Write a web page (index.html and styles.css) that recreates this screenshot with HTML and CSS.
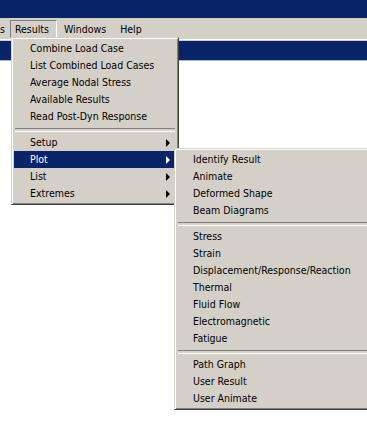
FILE: index.html
```html
<!DOCTYPE html>
<html lang="en">
<head>
  <meta charset="UTF-8">
  <title>Results menu</title>
  <link rel="stylesheet" href="styles.css">
</head>
<body>
  <div class="app">
    <div class="titlebar"></div>

    <div class="menubar">
      <span class="menubar-item clip">s</span>
      <span class="menubar-item open">Results</span>
      <span class="menubar-item">Windows</span>
      <span class="menubar-item">Help</span>
    </div>

    <div class="workspace">
      <div class="child-title"></div>
      <div class="child-body"></div>
    </div>

    <!-- Menu Results -->
    <div class="menu menu-results">
      <div class="item">Combine Load Case</div>
      <div class="item">List Combined Load Cases</div>
      <div class="item">Average Nodal Stress</div>
      <div class="item">Available Results</div>
      <div class="item">Read Post-Dyn Response</div>
      <div class="sep"></div>
      <div class="item sub">Setup</div>
      <div class="item sub active">Plot</div>
      <div class="item sub">List</div>
      <div class="item sub">Extremes</div>
    </div>

    <!-- Submenu Plot -->
    <div class="menu menu-plot">
      <div class="item">Identify Result</div>
      <div class="item">Animate</div>
      <div class="item">Deformed Shape</div>
      <div class="item">Beam Diagrams</div>
      <div class="sep"></div>
      <div class="item">Stress</div>
      <div class="item">Strain</div>
      <div class="item">Displacement/Response/Reaction</div>
      <div class="item">Thermal</div>
      <div class="item">Fluid Flow</div>
      <div class="item">Electromagnetic</div>
      <div class="item">Fatigue</div>
      <div class="sep"></div>
      <div class="item">Path Graph</div>
      <div class="item">User Result</div>
      <div class="item">User Animate</div>
    </div>
  </div>
</body>
</html>
```

FILE: styles.css
```css
/* Reset e tipografia */
* { box-sizing: border-box; margin: 0; padding: 0; }
body {
  font-family: "DejaVu Sans Condensed", "DejaVu Sans", sans-serif;
  font-size: 10.5px;
  color: #000;
  background: #fff;
  overflow: hidden;
}

.app {
  position: relative;
  width: 367px;
  height: 423px;
  display: flex;
  flex-direction: column;
}

/* Barra de título */
.titlebar {
  height: 18px;
  background: #0a246a;
}

/* Barra de menus */
.menubar {
  height: 21px;
  background: #d4d0c8;
  display: flex;
  align-items: center;
}
.menubar-item {
  height: 18px;
  line-height: 17px;
  padding: 0 6px;
  border: 1px solid transparent;
}
.menubar-item.clip {
  padding: 0 4px 0 0;
  margin-left: -1px;
}
.menubar-item.open {
  padding: 0 7px 0 4px;
  border-color: #808080 #fff #fff #808080;
}

/* Janela filha */
.workspace {
  flex: 1;
  display: flex;
  flex-direction: column;
  border-top: 1px solid #fff;
  padding-top: 1px;
  background: #d4d0c8;
}
.child-title {
  height: 20px;
  background: #0a246a;
  border-bottom: 1px solid #a6b6d8;
}
.child-body {
  flex: 1;
  background: #fff;
}

/* Menus suspensos */
.menu {
  position: absolute;
  background: #d4d0c8;
  border: 1px solid;
  border-color: #d4d0c8 #404040 #404040 #d4d0c8;
  box-shadow: inset 1px 1px 0 #fff, inset -1px -1px 0 #808080;
  padding: 2px;
}
.menu-results {
  left: 11px;
  top: 37px;
  width: 168px;
}
.menu-plot {
  left: 174px;
  top: 148px;
  width: 200px;
}

.item {
  position: relative;
  height: 17px;
  line-height: 17px;
  padding-left: 16px;
  white-space: nowrap;
}
.item.active {
  background: #0a246a;
  color: #fff;
}
.item.sub::after {
  content: "";
  position: absolute;
  right: 6px;
  top: 5px;
  border-left: 4px solid #000;
  border-top: 4px solid transparent;
  border-bottom: 4px solid transparent;
}
.item.active::after {
  border-left-color: #fff;
}

.sep {
  height: 9px;
  display: flex;
  flex-direction: column;
  justify-content: center;
  padding: 0 1px;
}
.sep::before {
  content: "";
  display: block;
  height: 2px;
  border-top: 1px solid #808080;
  border-bottom: 1px solid #fff;
}
```
